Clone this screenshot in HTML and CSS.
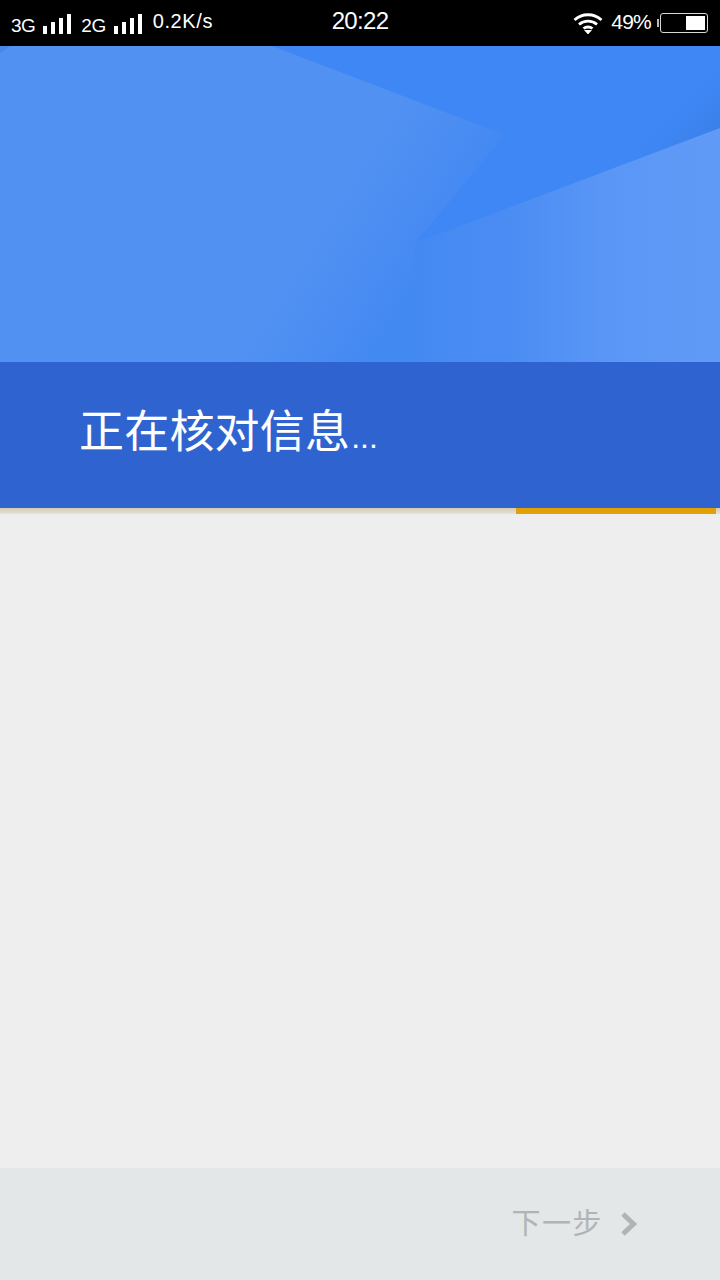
FILE: index.html
```html
<!DOCTYPE html>
<html lang="zh-CN">
<head>
    <meta charset="UTF-8">
    <meta name="viewport" content="width=device-width, initial-scale=1.0">
    <title>正在核对信息</title>
    <link rel="stylesheet" href="styles.css">
</head>
<body>
    <div class="statusbar">
        <div class="status-left">
            <span class="net">3G</span>
            <svg class="signal" width="28" height="22" viewBox="0 0 28 22"><path d="M0 13h4v8H0zM8 9h4v12H8zM16 5h4v16h-4zM24 1h4v20h-4z" fill="#fff"/></svg>
            <span class="net net-second">2G</span>
            <svg class="signal" width="28" height="22" viewBox="0 0 28 22"><path d="M0 13h4v8H0zM8 9h4v12H8zM16 5h4v16h-4zM24 1h4v20h-4z" fill="#fff"/></svg>
            <span class="speed">0.2K/s</span>
        </div>
        <div class="clock">20:22</div>
        <div class="status-right">
            <svg class="wifi" width="30" height="22" viewBox="0 0 30 22">
                <path d="M1.500 8C9 1 21 1 28.500 8M6 12.500c5-4.500 13-4.500 18 0M10.500 16.500c2.500-2 6.500-2 9 0" fill="none" stroke="#fff" stroke-width="2.800"/>
                <path d="M11 18h8l-4 4.500z" fill="#fff"/>
            </svg>
            <span class="percent">49%</span>
            <div class="battery"><div class="battery-level"></div></div>
        </div>
    </div>

    <div class="hero">
        <div class="shape-dark"></div>
        <div class="shape-light"></div>
    </div>

    <div class="band">
        <h1>正在核对信息<span class="dots">...</span></h1>
    </div>

    <div class="progress">
        <div class="progress-bar"></div>
    </div>

    <div class="content"></div>

    <div class="footer">
        <span class="next">下一步</span>
        <svg class="chevron" width="18" height="24" viewBox="0 0 18 24"><path d="M3 2l10.500 10L3 22" fill="none" stroke="#b1b4b6" stroke-width="5"/></svg>
    </div>
</body>
</html>
```

FILE: styles.css
```css
* {
    margin: 0;
    padding: 0;
    box-sizing: border-box;
}
body {
    width: 720px;
    height: 1280px;
    display: flex;
    flex-direction: column;
    background: #eeeeee;
    font-family: "Liberation Sans", "Noto Sans CJK SC", sans-serif;
    overflow: hidden;
}
.statusbar {
    height: 46px;
    flex: none;
    display: grid;
    grid-template-columns: 1fr auto 1fr;
    align-items: center;
    background: #000;
    color: #fff;
}
.status-left {
    display: flex;
    align-items: center;
    padding-left: 11px;
}
.net {
    font-size: 19px;
    margin-top: 5px;
    letter-spacing: -0.5px;
}
.net-second {
    margin-left: 10px;
}
.signal {
    margin-left: 8px;
    margin-top: 1px;
}
.speed {
    font-size: 20px;
    margin-left: 11px;
    margin-bottom: 4px;
    letter-spacing: 0.6px;
}
.clock {
    font-size: 24px;
    margin-bottom: 4px;
    letter-spacing: -0.7px;
}
.status-right {
    display: flex;
    align-items: center;
    justify-content: flex-end;
    padding-right: 12px;
}
.percent {
    font-size: 21px;
    margin-left: 8px;
    margin-bottom: 3px;
    letter-spacing: -0.8px;
}
.battery {
    position: relative;
    width: 48px;
    height: 20px;
    margin-left: 9px;
    padding: 2px;
    display: flex;
    justify-content: flex-end;
    border: 1px solid #d8d8d8;
    border-radius: 3px;
}
.battery::before {
    content: "";
    position: absolute;
    left: -4px;
    top: 5px;
    width: 2px;
    height: 8px;
    background: #bbb;
}
.battery-level {
    width: 19px;
    background: #fff;
}
.hero {
    position: relative;
    height: 316px;
    flex: none;
    overflow: hidden;
    background: linear-gradient(122deg, #5191f2 365px, #4b8df2 425px, #4389f2 480px);
}
.hero::before {
    content: "";
    position: absolute;
    left: 0;
    top: 0;
    width: 10px;
    height: 7px;
    background: #4a86e6;
    clip-path: polygon(0 0, 100% 0, 0 100%);
}
.shape-dark {
    position: absolute;
    inset: 0;
    background: linear-gradient(135deg, #3e87f5 72%, #3a7de2 80%);
    clip-path: polygon(272px 0, 720px 0, 720px 84px, 415px 197px, 505px 89px);
}
.shape-light {
    position: absolute;
    inset: 0;
    background: linear-gradient(90deg, #4489f2 415px, #4a8cf3 500px, #5b97f6 620px, #609af7 700px);
    clip-path: polygon(415px 197px, 720px 82px, 720px 316px, 415px 316px);
}
.band {
    height: 146px;
    flex: none;
    display: flex;
    align-items: center;
    padding-left: 79px;
    background: #2f64d0;
    color: #fff;
}
.band h1 {
    font-size: 45px;
    font-weight: 400;
    line-height: 1;
    margin-bottom: 6px;
    letter-spacing: 0.2px;
    white-space: nowrap;
}
.dots {
    font-size: 32px;
    letter-spacing: 0;
    margin-left: 1px;
}
.progress {
    height: 6px;
    flex: none;
    padding-left: 516px;
    padding-right: 4px;
    background: linear-gradient(180deg, #d3cab2 0, #e6e3da 100%);
}
.progress-bar {
    height: 100%;
    background: #e0a006;
}
.content {
    flex: 1;
    background: #eeeeee;
}
.footer {
    height: 112px;
    flex: none;
    display: flex;
    align-items: center;
    justify-content: flex-end;
    padding-right: 82px;
    background: #e3e7e8;
}
.next {
    font-size: 29px;
    color: #b1b4b6;
    letter-spacing: 1.500px;
    margin-bottom: 6px;
}
.chevron {
    margin-left: 17px;
}
```
